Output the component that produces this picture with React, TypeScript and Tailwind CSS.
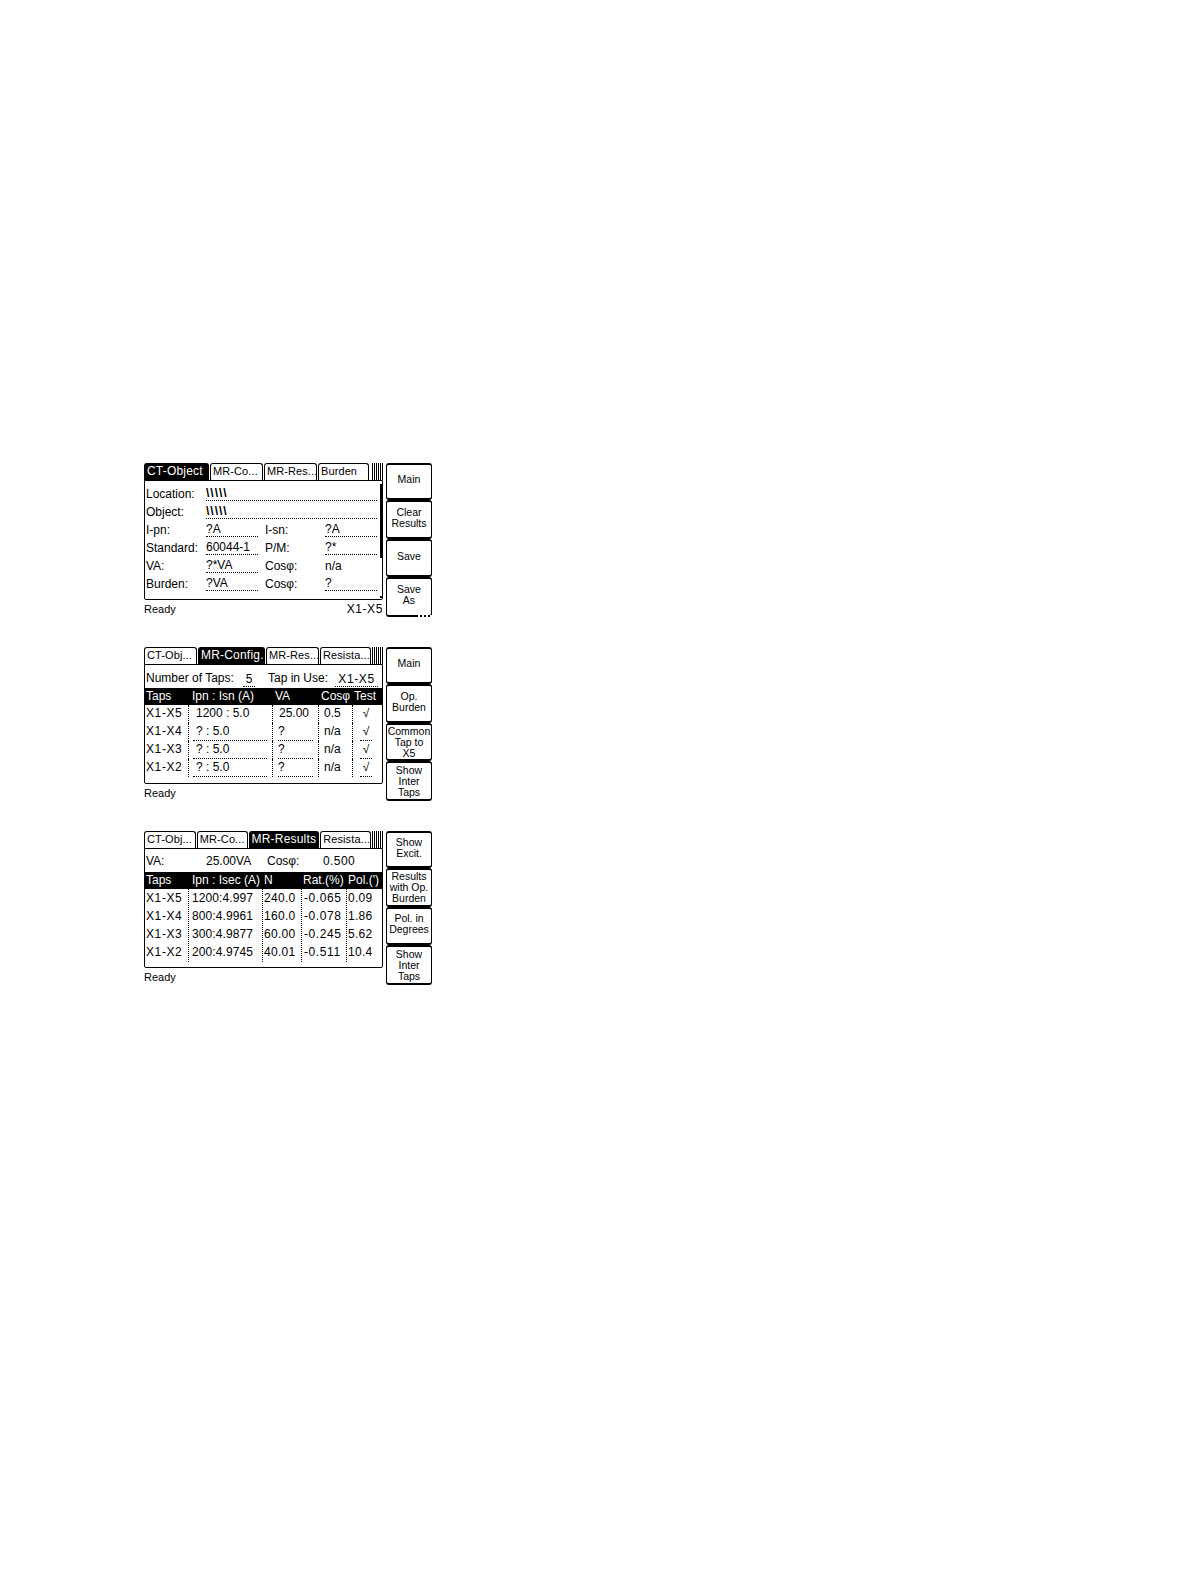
const font = "font-['Liberation_Sans',Arial,sans-serif]"

interface ScreenProps {
    tabs: { label: string; width: string }[]
    active: number
    keys: string[][]
    right?: string
    torn?: boolean
    children: React.ReactNode
}

const Screen = ({ tabs, active, keys, right, torn, children }: ScreenProps) => (
    <div className="flex h-[154px] w-[288px] gap-[3px]">
        <div className="flex w-[239px] flex-col">
            <div className="flex h-[17px] items-stretch">
                {tabs.map((tab, i) => (
                    <div
                        key={i}
                        className={`${tab.width} mr-px overflow-hidden whitespace-nowrap rounded-t-[3px] border border-b-0 border-black pl-[2px] leading-[15px] ${i === active ? "bg-black text-[12px] tracking-[0.2px] text-white" : "bg-white text-[11px] tracking-[0.1px] text-black"}`}
                    >
                        {tab.label}
                    </div>
                ))}
                <div className="flex flex-1 justify-end gap-px">
                    {[0, 1, 2, 3, 4, 5].map(i => (
                        <div key={i} className="w-px bg-black" />
                    ))}
                </div>
            </div>
            <div className="relative h-[120px] rounded-b-[2px] border border-black bg-white">
                {children}
            </div>
            <div className="flex h-[17px] items-center justify-between text-black">
                <span className="text-[11px] leading-[14px]">Ready</span>
                <span className="text-[12px] leading-[14px] tracking-[0.6px]">{right}</span>
            </div>
        </div>
        <div className="grid w-[46px] grid-rows-[37px_39px_38px_40px]">
            {keys.map((lines, i) => (
                <div
                    key={i}
                    className={`relative flex flex-col items-center justify-center rounded-[3px] border border-t-2 border-b-2 border-black text-center text-[10.5px] leading-[11px] text-black ${lines.length < 3 ? "pb-[4px]" : ""}`}
                >
                    {lines.map((line, j) => (
                        <span key={j}>{line}</span>
                    ))}
                    {torn && i === keys.length - 1 && (
                        <div className="absolute bottom-[-2px] right-[-1px] h-[2px] w-[14px] border-b-2 border-dotted border-white" />
                    )}
                </div>
            ))}
        </div>
    </div>
)

const Field = ({ value, className }: { value: string; className: string }) => (
    <span className={`${className} block h-[15px] border-b border-dotted border-black leading-[15px]`}>{value}</span>
)

const ObjectPanel = () => (
    <div className="pt-[5px] text-[12px] text-black">
        <div className="flex h-[18px] items-start pl-[1px]">
            <span className="w-[60px] leading-[17px]">Location:</span>
            <Field value="\\\\\" className="w-[171px] font-bold tracking-[1px]" />
        </div>
        <div className="flex h-[18px] items-start pl-[1px]">
            <span className="w-[60px] leading-[17px]">Object:</span>
            <Field value="\\\\\" className="w-[171px] font-bold tracking-[1px]" />
        </div>
        {[
            ["I-pn:", "?A", "I-sn:", "?A"],
            ["Standard:", "60044-1", "P/M:", "?*"],
            ["VA:", "?*VA", "Cosφ:", "n/a"],
            ["Burden:", "?VA", "Cosφ:", "?"],
        ].map((row, i) => (
            <div key={i} className="flex h-[18px] items-start pl-[1px]">
                <span className="w-[60px] leading-[17px]">{row[0]}</span>
                <Field value={row[1]} className="w-[52px]" />
                <span className="ml-[7px] w-[60px] leading-[17px]">{row[2]}</span>
                {row[3] === "n/a" ? (
                    <span className="w-[52px] leading-[17px]">{row[3]}</span>
                ) : (
                    <Field value={row[3]} className="w-[52px]" />
                )}
            </div>
        ))}
        <div className="absolute right-[-1px] top-[3px] h-[74px] w-[3px] bg-black" />
        <div className="absolute bottom-[1px] right-0 h-[2px] w-[2px] bg-black" />
    </div>
)

const ConfigPanel = () => (
    <div className="text-[12px] text-black">
        <div className="flex h-[23px] items-end pb-[1px] pl-[1px]">
            <span className="w-[97px] whitespace-nowrap">Number of Taps:</span>
            <span className="w-[12px] border-b border-dotted border-black text-center leading-[14px]">5</span>
            <span className="ml-[13px] w-[67px] whitespace-nowrap">Tap in Use:</span>
            <span className="w-[43px] border-b border-dotted border-black text-center leading-[14px] tracking-[0.6px]">X1-X5</span>
        </div>
        <div className="grid h-[17px] grid-cols-[43px_84px_46px_34px_30px] whitespace-nowrap bg-black leading-[16px] text-white">
            <span className="pl-[1px]">Taps</span>
            <span className="pl-[4px]">Ipn : Isn (A)</span>
            <span className="pl-[3px]">VA</span>
            <span className="pl-[3px]">Cosφ</span>
            <span className="pl-[2px]">Test</span>
        </div>
        {[
            ["X1-X5", "1200 : 5.0", "25.00", "0.5", "√"],
            ["X1-X4", "? : 5.0", "?", "n/a", "√"],
            ["X1-X3", "? : 5.0", "?", "n/a", "√"],
            ["X1-X2", "? : 5.0", "?", "n/a", "√"],
        ].map((row, i) => (
            <div key={i} className="grid h-[18px] grid-cols-[43px_84px_46px_34px_30px] whitespace-nowrap leading-[17px]">
                <span className="pl-[1px] tracking-[0.6px]">{row[0]}</span>
                <span className="border-l border-dotted border-black pl-[4px]">
                    <span className={`block w-[74px] pl-[3px] ${i > 0 ? "border-b border-dotted border-black" : ""}`}>{row[1]}</span>
                </span>
                <span className="border-l border-dotted border-black pl-[5px]">
                    <span className={`block w-[35px] ${i > 0 ? "border-b border-dotted border-black" : "pl-[1px]"}`}>{row[2]}</span>
                </span>
                <span className="border-l border-dotted border-black pl-[5px]">{row[3]}</span>
                <span className="border-l border-dotted border-black pl-[7px]">
                    <span className={`block w-[12px] text-center ${i > 0 ? "border-b border-dotted border-black" : ""}`}>{row[4]}</span>
                </span>
            </div>
        ))}
    </div>
)

const ResultsPanel = () => (
    <div className="text-[12px] text-black">
        <div className="flex h-[23px] items-center pl-[1px] pt-[1px]">
            <span className="w-[60px]">VA:</span>
            <span className="w-[61px]">25.00VA</span>
            <span className="w-[56px]">Cosφ:</span>
            <span className="tracking-[0.4px]">0.500</span>
        </div>
        <div className="grid h-[17px] grid-cols-[43px_74px_39px_45px_36px] whitespace-nowrap bg-black leading-[16px] text-white">
            <span className="pl-[1px]">Taps</span>
            <span className="pl-[4px]">Ipn : Isec (A)</span>
            <span className="pl-[2px]">N</span>
            <span className="pl-[2px]">Rat.(%)</span>
            <span className="pl-[2px]">Pol.(')</span>
        </div>
        {[
            ["X1-X5", "1200:4.997", "240.0", "-0.065", "0.09"],
            ["X1-X4", "800:4.9961", "160.0", "-0.078", "1.86"],
            ["X1-X3", "300:4.9877", "60.00", "-0.245", "5.62"],
            ["X1-X2", "200:4.9745", "40.01", "-0.511", "10.4"],
        ].map((row, i) => (
            <div key={i} className="grid h-[18px] grid-cols-[43px_74px_39px_45px_36px] whitespace-nowrap leading-[19px]">
                <span className="pl-[1px] tracking-[0.6px]">{row[0]}</span>
                <span className="border-l border-dotted border-black pl-[3px] tracking-[0.1px]">{row[1]}</span>
                <span className="border-l border-dotted border-black pl-[1px] tracking-[0.3px]">{row[2]}</span>
                <span className="border-l border-dotted border-black pl-[2px] tracking-[0.6px]">{row[3]}</span>
                <span className="border-l border-dotted border-black pl-[1px] tracking-[0.3px]">{row[4]}</span>
            </div>
        ))}
    </div>
)

const App = () => (
    <div className={`${font} flex min-h-[1584px] flex-col gap-[30px] bg-white pl-[144px] pt-[463px]`}>
        <Screen
            tabs={[
                { label: "CT-Object", width: "w-[65px]" },
                { label: "MR-Co...", width: "w-[53px]" },
                { label: "MR-Res...", width: "w-[53px]" },
                { label: "Burden", width: "w-[51px]" },
            ]}
            active={0}
            right="X1-X5"
            torn
            keys={[["Main"], ["Clear", "Results"], ["Save"], ["Save", "As"]]}
        >
            <ObjectPanel />
        </Screen>
        <Screen
            tabs={[
                { label: "CT-Obj...", width: "w-[53px]" },
                { label: "MR-Config.", width: "w-[67px]" },
                { label: "MR-Res...", width: "w-[53px]" },
                { label: "Resista...", width: "w-[51px]" },
            ]}
            active={1}
            keys={[["Main"], ["Op.", "Burden"], ["Common", "Tap to", "X5"], ["Show", "Inter", "Taps"]]}
        >
            <ConfigPanel />
        </Screen>
        <Screen
            tabs={[
                { label: "CT-Obj...", width: "w-[52px]" },
                { label: "MR-Co...", width: "w-[51px]" },
                { label: "MR-Results", width: "w-[71px]" },
                { label: "Resista...", width: "w-[51px]" },
            ]}
            active={2}
            keys={[["Show", "Excit."], ["Results", "with Op.", "Burden"], ["Pol. in", "Degrees"], ["Show", "Inter", "Taps"]]}
        >
            <ResultsPanel />
        </Screen>
    </div>
)

export default App
